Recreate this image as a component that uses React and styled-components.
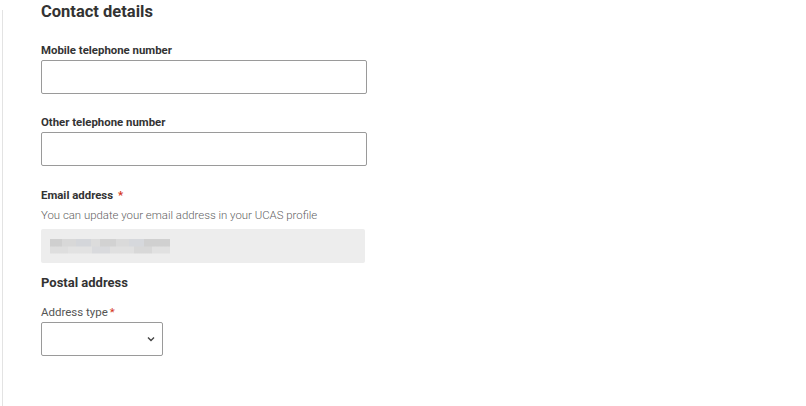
import styled, { createGlobalStyle } from "styled-components";

const GlobalStyle = createGlobalStyle`
  body {
    margin: 0;
    background: #fff;
    font-family: Roboto, "Liberation Sans", Arial, sans-serif;
    color: #333;
  }
`;

const Page = styled.div`
  display: flex;
  width: 806px;
  height: 406px;
  overflow: hidden;
`;

const Rail = styled.div`
  width: 1px;
  margin: 10px 0 0 2px;
  background: #e3e3e3;
`;

const Content = styled.div`
  display: flex;
  flex-direction: column;
  padding: 1px 0 0 38px;
`;

const Heading = styled.h2`
  margin: 0 0 19px;
  font-size: 16.5px;
  line-height: 22px;
  font-weight: 700;
  color: #333;
`;

const SubHeading = styled.h3`
  margin: 0 0 12px;
  font-size: 13px;
  line-height: 18px;
  font-weight: 700;
  color: #333;
`;

const Field = styled.div`
  display: flex;
  flex-direction: column;
  margin-bottom: ${p => p.$gap ?? 20}px;
`;

const Label = styled.label`
  font-size: ${p => (p.$plain ? 11.5 : 11.4)}px;
  line-height: 16px;
  font-weight: ${p => (p.$plain ? 400 : 700)};
  color: ${p => (p.$plain ? "#555" : "#333")};
  margin-bottom: 2px;
`;

const Star = styled.span`
  color: #d4351c;
  margin-left: ${p => (p.$tight ? 2 : 5)}px;
`;

const Hint = styled.div`
  font-size: 11.4px;
  line-height: 16px;
  font-weight: 300;
  color: #5f5f5f;
  margin: 2px 0 6px;
`;

const Input = styled.div`
  box-sizing: border-box;
  width: 326px;
  height: 34px;
  border: 1px solid #9a9a9a;
  border-radius: 2px;
  background: #fff;
`;

const ReadOnly = styled.div`
  box-sizing: border-box;
  display: flex;
  align-items: center;
  width: 324px;
  height: 34px;
  padding-left: 9px;
  border-radius: 2px;
  background: #ededed;
`;

const Blurred = styled.div`
  width: 120px;
  height: 15px;
  background:
    linear-gradient(90deg, #cfcfcf 0 10%, #d8d8d8 10% 22%, #d4d6da 22% 34%, #dcdcdc 34% 42%, #d2d2d2 42% 55%, #dadada 55% 66%, #d6d8dc 66% 78%, #d0d0d0 78% 100%) top / 100% 50% no-repeat,
    linear-gradient(90deg, #dedede 0 15%, #e2e2e2 15% 35%, #d9dadd 35% 50%, #e0e0e0 50% 70%, #d8d8d8 70% 85%, #e1e1e1 85% 100%) bottom / 100% 50% no-repeat;
  filter: blur(0.6px);
`;

const Select = styled.div`
  box-sizing: border-box;
  display: flex;
  align-items: center;
  justify-content: flex-end;
  width: 122px;
  height: 34px;
  padding-right: 6px;
  border: 1px solid #9a9a9a;
  border-radius: 2px;
  background: #fff;
`;

const Chevron = () => (
  <svg width="10" height="10" viewBox="0 0 10 10">
    <path d="M2 3.5 L5 6.5 L8 3.5" fill="none" stroke="#444" strokeWidth="1.4" />
  </svg>
);

export default function App() {
  return (
    <>
      <GlobalStyle />
      <Page>
        <Rail />
        <Content>
          <Heading>Contact details</Heading>
          <Field>
            <Label>Mobile telephone number</Label>
            <Input />
          </Field>
          <Field $gap={21}>
            <Label>Other telephone number</Label>
            <Input />
          </Field>
          <Field $gap={11}>
            <Label>Email address<Star>*</Star></Label>
            <Hint>You can update your email address in your UCAS profile</Hint>
            <ReadOnly><Blurred /></ReadOnly>
          </Field>
          <SubHeading>Postal address</SubHeading>
          <Field>
            <Label $plain>Address type<Star $tight>*</Star></Label>
            <Select><Chevron /></Select>
          </Field>
        </Content>
      </Page>
    </>
  );
}
